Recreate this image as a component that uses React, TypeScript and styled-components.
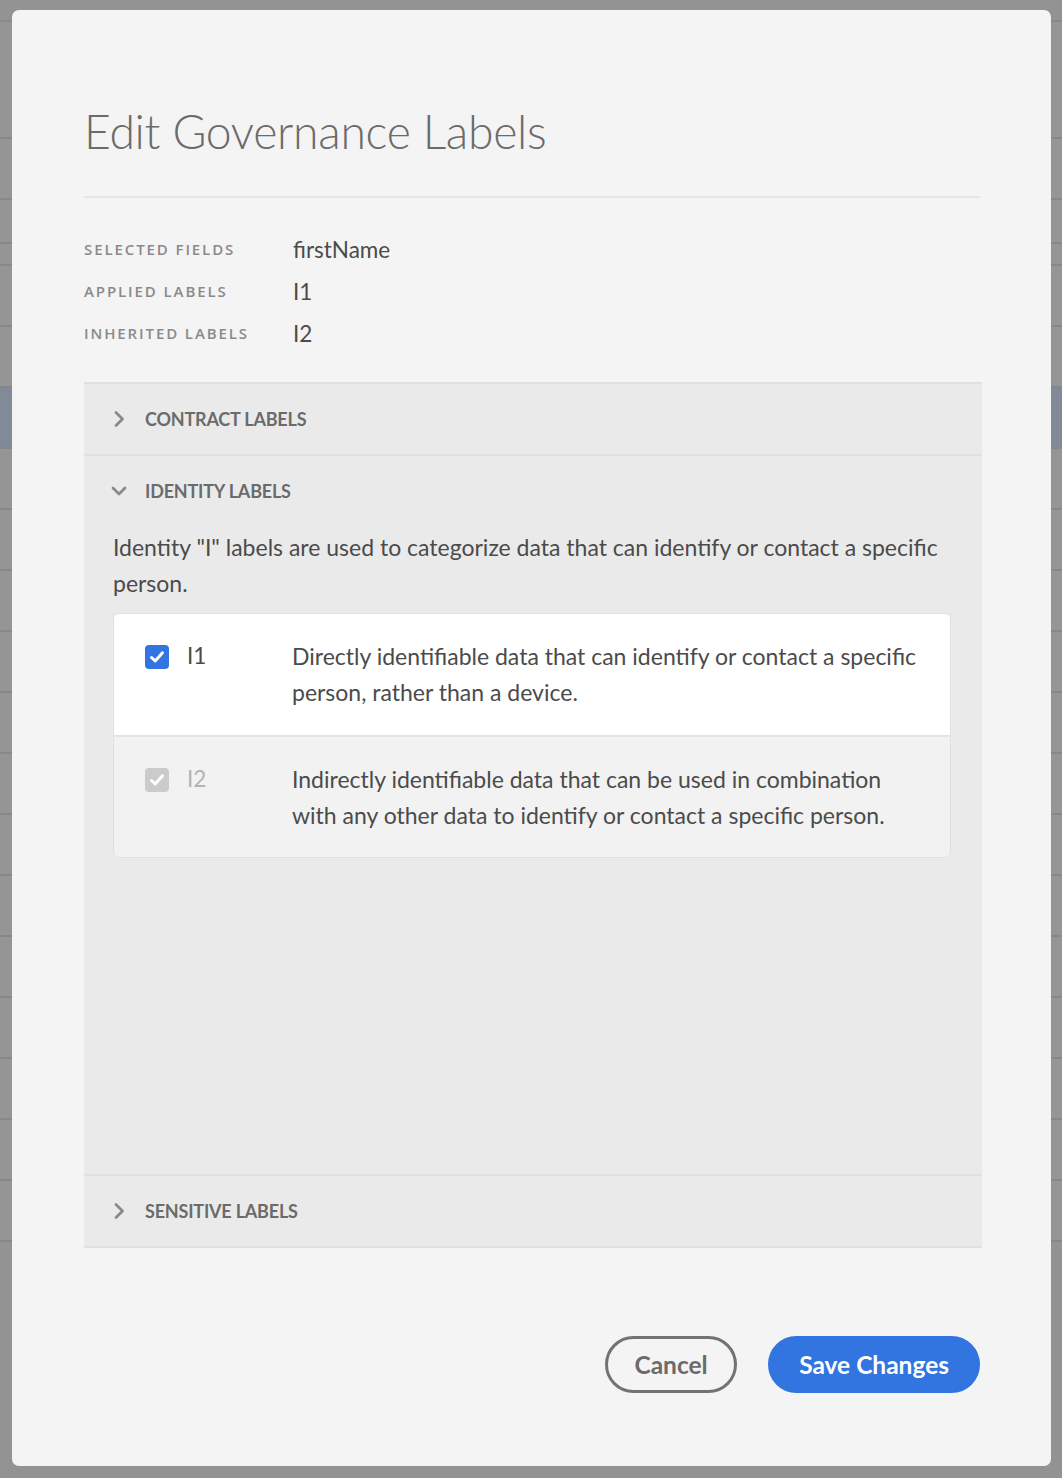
import React from "react";
import styled, { createGlobalStyle } from "styled-components";

const Global = createGlobalStyle`
  html, body { margin: 0; padding: 0; }
  body { background: #939393; font-family: Lato, "Open Sans", sans-serif; overflow: hidden; }
`;

const Page = styled.div`
  width: 1062px;
  height: 1478px;
  background: #939393;
  display: flex;
  flex-direction: column;
`;

const BgTop = styled.div`
  height: 20px;
  background: #939393;
  border-bottom: 2px solid #8a8a8a;
`;

const BgRow = styled.div<{ $tint?: boolean; $h?: number }>`
  height: ${(p) => p.$h ?? 59}px;
  background: ${(p) => (p.$tint ? "#828a98" : "#959595")};
  border-bottom: 2px solid #878787;
  display: flex;
  justify-content: flex-end;
  align-items: center;
  font-family: "Open Sans", sans-serif;
  font-size: 20px;
  color: #3a3a3a;
`;

const Overlay = styled.div`
  position: fixed;
  inset: 0;
`;

const Modal = styled.div`
  position: absolute;
  left: 12px;
  top: 10px;
  width: 1039px;
  height: 1456px;
  background: #f4f4f4;
  border-radius: 7px;
  box-sizing: border-box;
  padding: 0 69px 0 72px;
  display: flex;
  flex-direction: column;
`;

const Title = styled.h1`
  margin: 93px 0 0;
  font-family: Lato, sans-serif;
  font-weight: 300;
  font-size: 46.3px;
  line-height: 56px;
  color: #6b6b6b;
  letter-spacing: -0.3px;
`;

const Divider = styled.div`
  margin-top: 37px;
  height: 2px;
  width: 896px;
  background: #e6e6e6;
`;

const Meta = styled.div`
  margin-top: 30px;
  display: grid;
  grid-template-columns: 209px 1fr;
`;

const MetaLabel = styled.div`
  height: 42px;
  display: flex;
  align-items: center;
  font-family: "Open Sans", sans-serif;
  font-size: 15px;
  font-weight: 600;
  letter-spacing: 1.9px;
  color: #8a8a8a;
  text-transform: uppercase;
`;

const MetaValue = styled.div`
  height: 42px;
  display: flex;
  align-items: center;
  font-family: Lato, sans-serif;
  font-size: 22.5px;
  color: #4b4b4b;
`;

const Accordion = styled.div`
  margin-top: 28px;
  width: 898px;
  background: #eaeaea;
  border-top: 2px solid #e0e0e0;
  border-bottom: 2px solid #e0e0e0;
  display: flex;
  flex-direction: column;
`;

const Section = styled.div<{ $grow?: boolean }>`
  display: flex;
  flex-direction: column;
  border-bottom: 2px solid #e0e0e0;
  ${(p) => (p.$grow ? "min-height: 720px; box-sizing: border-box;" : "")}
  &:last-child { border-bottom: none; }
`;

const Header = styled.div`
  height: 70px;
  display: flex;
  align-items: center;
  padding-left: 25px;
  gap: 17px;
  font-family: Lato, sans-serif;
  font-weight: 700;
  font-size: 18px;
  color: #6b6b6b;
  letter-spacing: -0.2px;
`;

const ChevronBox = styled.span`
  width: 19px;
  height: 20px;
  display: inline-flex;
  align-items: center;
  justify-content: center;
`;

const Body = styled.div`
  padding: 0 31px 0 29px;
  display: flex;
  flex-direction: column;
`;

const Desc = styled.p`
  margin: 3px 0 0;
  font-family: Lato, sans-serif;
  font-size: 23px;
  line-height: 36px;
  color: #4b4b4b;
`;

const Card = styled.div`
  margin-top: 12px;
  border: 1px solid #e0e0e0;
  border-radius: 6px;
  overflow: hidden;
  display: flex;
  flex-direction: column;
`;

const Item = styled.div<{ $disabled?: boolean }>`
  height: 121px;
  box-sizing: border-box;
  background: ${(p) => (p.$disabled ? "#f2f2f2" : "#ffffff")};
  display: grid;
  grid-template-columns: 42px 105px 1fr;
  padding: 24px 20px 0 31px;
  & + & { border-top: 2px solid #e4e4e4; height: 122px; }
`;

const Box = styled.span<{ $disabled?: boolean }>`
  margin-top: 7px;
  width: 24px;
  height: 24px;
  border-radius: 4px;
  background: ${(p) => (p.$disabled ? "#cbcbcb" : "#3274e0")};
  display: inline-flex;
  align-items: center;
  justify-content: center;
`;

const ItemLabel = styled.span<{ $disabled?: boolean }>`
  font-family: Lato, sans-serif;
  font-size: 22.5px;
  line-height: 36px;
  color: ${(p) => (p.$disabled ? "#b3b3b3" : "#4b4b4b")};
`;

const ItemText = styled.span`
  font-family: Lato, sans-serif;
  font-size: 23px;
  line-height: 36px;
  color: #4b4b4b;
`;

const Footer = styled.div`
  margin-top: 88px;
  width: 896px;
  display: flex;
  justify-content: flex-end;
  gap: 31px;
`;

const Button = styled.button<{ $primary?: boolean }>`
  height: 57px;
  padding: 0 ${(p) => (p.$primary ? 28 : 26.5)}px;
  border-radius: 29px;
  box-sizing: border-box;
  border: 3px solid ${(p) => (p.$primary ? "#3274e0" : "#727272")};
  background: ${(p) => (p.$primary ? "#3274e0" : "transparent")};
  color: ${(p) => (p.$primary ? "#ffffff" : "#6b6b6b")};
  font-family: Lato, sans-serif;
  font-weight: 700;
  font-size: 24.5px;
  cursor: pointer;
`;

const Chevron = ({ open }: { open?: boolean }) => (
  <ChevronBox>
    <svg width="16" height="18" viewBox="0 0 16 18">
      <path
        d={open ? "M2 6 L8 12 L14 6" : "M5 2.5 L11.5 9 L5 15.5"}
        fill="none"
        stroke="#8a8a8a"
        strokeWidth="2.8"
        strokeLinecap="round"
        strokeLinejoin="round"
      />
    </svg>
  </ChevronBox>
);

const Check = ({ disabled }: { disabled?: boolean }) => (
  <Box $disabled={disabled}>
    <svg width="18" height="18" viewBox="0 0 18 18">
      <path d="M3.5 9.5 L7.2 13 L14.5 4.8" fill="none" stroke="#fff" strokeWidth="3" strokeLinecap="round" strokeLinejoin="round" />
    </svg>
  </Box>
);

const bgRows = [
  { h: 115 }, { h: 59 }, { h: 42 }, { h: 20 }, { h: 59 }, { h: 59 }, { h: 59, tint: true },
  { h: 59 }, { h: 59 }, { h: 59 }, { h: 59 }, { h: 59 }, { h: 59 }, { h: 59 }, { h: 59 },
  { h: 59 }, { h: 59 }, { h: 59 }, { h: 59 }, { h: 59 },
];

export default function App() {
  return (
    <>
      <Global />
      <Page>
        <BgTop />
        {bgRows.map((r, i) => (
          <BgRow key={i} $h={r.h} $tint={r.tint} />
        ))}
      </Page>
      <Overlay>
        <Modal>
          <Title>Edit Governance Labels</Title>
          <Divider />
          <Meta>
            <MetaLabel>Selected Fields</MetaLabel>
            <MetaValue>firstName</MetaValue>
            <MetaLabel>Applied Labels</MetaLabel>
            <MetaValue>I1</MetaValue>
            <MetaLabel>Inherited Labels</MetaLabel>
            <MetaValue>I2</MetaValue>
          </Meta>
          <Accordion>
            <Section>
              <Header>
                <Chevron />
                CONTRACT LABELS
              </Header>
            </Section>
            <Section $grow>
              <Header>
                <Chevron open />
                IDENTITY LABELS
              </Header>
              <Body>
                <Desc>
                  Identity "I" labels are used to categorize data that can identify or contact a specific person.
                </Desc>
                <Card>
                  <Item>
                    <Check />
                    <ItemLabel>I1</ItemLabel>
                    <ItemText>Directly identifiable data that can identify or contact a specific person, rather than a device.</ItemText>
                  </Item>
                  <Item $disabled>
                    <Check disabled />
                    <ItemLabel $disabled>I2</ItemLabel>
                    <ItemText>Indirectly identifiable data that can be used in combination with any other data to identify or contact a specific person.</ItemText>
                  </Item>
                </Card>
              </Body>
            </Section>
            <Section>
              <Header>
                <Chevron />
                SENSITIVE LABELS
              </Header>
            </Section>
          </Accordion>
          <Footer>
            <Button>Cancel</Button>
            <Button $primary>Save Changes</Button>
          </Footer>
        </Modal>
      </Overlay>
    </>
  );
}
